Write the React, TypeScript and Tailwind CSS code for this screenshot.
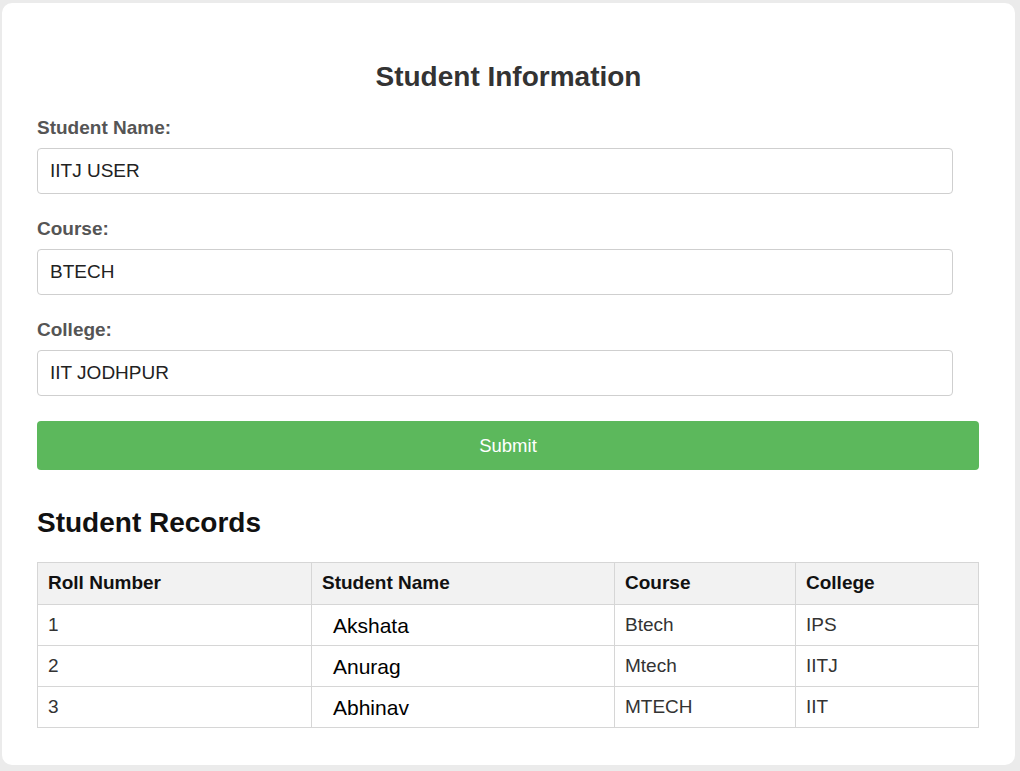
import { useState } from 'react';

interface StudentRecord {
  roll: number;
  name: string;
  course: string;
  college: string;
}

const records: StudentRecord[] = [
  { roll: 1, name: 'Akshata', course: 'Btech', college: 'IPS' },
  { roll: 2, name: 'Anurag', course: 'Mtech', college: 'IITJ' },
  { roll: 3, name: 'Abhinav', course: 'MTECH', college: 'IIT' },
];

function Field({ label, value, onChange }: { label: string; value: string; onChange: (v: string) => void }) {
  return (
    <div className="mb-[24px]">
      <label className="block text-[19px] leading-[22px] font-bold text-[#555] mb-[9px]">{label}</label>
      <input
        value={value}
        onChange={(e) => onChange(e.target.value)}
        className="w-[916px] h-[46px] px-[12px] text-[19px] text-[#222] bg-white border border-[#cfcfcf] rounded-[4px] outline-none"
      />
    </div>
  );
}

export default function App() {
  const [name, setName] = useState('IITJ USER');
  const [course, setCourse] = useState('BTECH');
  const [college, setCollege] = useState('IIT JODHPUR');

  return (
    <div className="min-h-[771px] bg-[#ebebeb] pt-[3px] pl-[2px] pr-[5px] pb-[6px] font-['Liberation_Sans',Arial,sans-serif]">
      <div className="bg-white rounded-[10px] h-[762px] px-[35px] pt-[58px]">
        {/* Formulario */}
        <h2 className="text-center text-[28px] leading-[32px] font-bold text-[#333] mb-[24px]">Student Information</h2>

        <Field label="Student Name:" value={name} onChange={setName} />
        <Field label="Course:" value={course} onChange={setCourse} />
        <Field label="College:" value={college} onChange={setCollege} />

        <button className="w-[942px] h-[49px] bg-[#5cb85c] text-white text-[18.5px] rounded-[4px] mt-[1px]">
          Submit
        </button>

        {/* Tabla de registros */}
        <h2 className="mt-[37px] mb-[23px] text-[28px] leading-[32px] font-bold text-[#111]">Student Records</h2>

        <table className="w-[942px] border-collapse text-[19px]">
          <thead>
            <tr className="bg-[#f2f2f2] h-[42px]">
              <th className="w-[274px] border border-[#d6d6d6] text-left font-bold text-[#111] px-[10px]">Roll Number</th>
              <th className="w-[303px] border border-[#d6d6d6] text-left font-bold text-[#111] px-[10px]">Student Name</th>
              <th className="w-[181px] border border-[#d6d6d6] text-left font-bold text-[#111] px-[10px]">Course</th>
              <th className="border border-[#d6d6d6] text-left font-bold text-[#111] px-[10px]">College</th>
            </tr>
          </thead>
          <tbody>
            {records.map((r) => (
              <tr key={r.roll} className="h-[41px]">
                <td className="border border-[#d6d6d6] px-[10px] leading-[22px] text-[#333]">{r.roll}</td>
                <td className="border border-[#d6d6d6] pl-[21px] pr-[10px] pt-[1px] text-[21px] leading-[22px] text-black">{r.name}</td>
                <td className="border border-[#d6d6d6] px-[10px] leading-[22px] text-[#333]">{r.course}</td>
                <td className="border border-[#d6d6d6] px-[10px] leading-[22px] text-[#333]">{r.college}</td>
              </tr>
            ))}
          </tbody>
        </table>
      </div>
    </div>
  );
}
